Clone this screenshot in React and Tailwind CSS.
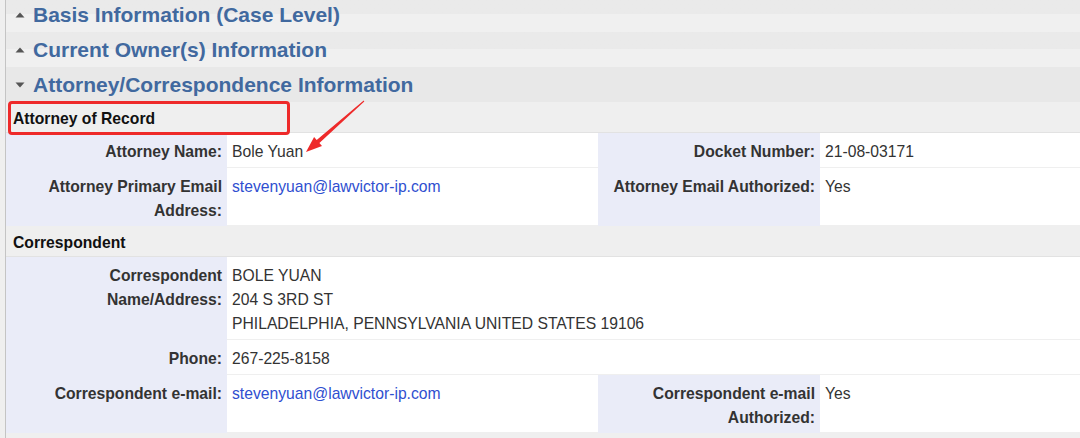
import React from "react";

const font = { fontFamily: '"Liberation Sans", Arial, sans-serif' };

function Caret({ open }) {
  return (
    <svg width="10" height="6" viewBox="0 0 10 6" className="shrink-0">
      {open ? (
        <polygon points="0.5,0.5 9.5,0.5 5,5.5" fill="#555" />
      ) : (
        <polygon points="0.5,5.5 9.5,5.5 5,0.5" fill="#555" />
      )}
    </svg>
  );
}

function SectionHeader({ title, open }) {
  return (
    <div
      className={
        open
          ? "h-[35px] flex items-center gap-[8px] pl-[9px] bg-[#e8e8e8]"
          : "h-[35px] flex items-center gap-[8px] pl-[9px] bg-linear-to-b from-[#eaeaea] from-50% to-[#f0f0f0] to-50%"
      }
    >
      <Caret open={open} />
      <span className="text-[21px] font-bold text-[#41699f] leading-none">{title}</span>
    </div>
  );
}

function SubHeader({ children }) {
  return (
    <div className="h-[31px] flex items-center pt-[3px] pl-[7px] bg-[#efefef] border-b border-[#e2e2e2] text-[15.7px] font-bold text-[#111]">
      {children}
    </div>
  );
}

function Label({ children }) {
  return (
    <div className="bg-[#eaecf8] text-right pr-[5px] pt-[7px] pb-[3px] font-bold text-[#333]">{children}</div>
  );
}

function Value({ children, span }) {
  return (
    <div
      className={
        "bg-white pl-[5px] pt-[7px] pb-[3px] text-[#333] border-b border-[#efefef] " + (span ? "col-span-3" : "")
      }
    >
      {children}
    </div>
  );
}

function Mail({ children }) {
  return <span className="text-[#2f4fd0]">{children}</span>;
}

export default function App() {
  return (
    <div className="w-[1080px] h-[438px] overflow-hidden bg-[#efefef] pl-[5px]" style={font}>
      <div className="relative -mt-[3px] border-l border-[#c4c4c4] min-h-[450px]">
        <SectionHeader title="Basis Information (Case Level)" />
        <SectionHeader title="Current Owner(s) Information" />
        <SectionHeader title="Attorney/Correspondence Information" open />

        <SubHeader>Attorney of Record</SubHeader>
        <div className="grid grid-cols-[221px_371px_222px_1fr] text-[15.7px] leading-6">
          <Label>Attorney Name:</Label>
          <Value>Bole Yuan</Value>
          <Label>Docket Number:</Label>
          <Value>21-08-03171</Value>

          <Label>
            Attorney Primary Email
            <br />
            Address:
          </Label>
          <Value>
            <Mail>stevenyuan@lawvictor-ip.com</Mail>
          </Value>
          <Label>Attorney Email Authorized:</Label>
          <Value>Yes</Value>
        </div>

        <SubHeader>Correspondent</SubHeader>
        <div className="grid grid-cols-[221px_371px_222px_1fr] text-[15.7px] leading-6">
          <Label>
            Correspondent
            <br />
            Name/Address:
          </Label>
          <Value span>
            BOLE YUAN
            <br />
            204 S 3RD ST
            <br />
            PHILADELPHIA, PENNSYLVANIA UNITED STATES 19106
          </Value>

          <Label>Phone:</Label>
          <Value span>267-225-8158</Value>

          <Label>Correspondent e-mail:</Label>
          <Value>
            <Mail>stevenyuan@lawvictor-ip.com</Mail>
          </Value>
          <Label>
            Correspondent e-mail
            <br />
            Authorized:
          </Label>
          <Value>Yes</Value>
        </div>

        {/* red annotation box + arrow */}
        <div className="absolute left-[2px] top-[104px] w-[282px] h-[34px] border-[3px] border-[#ee2a2a] rounded-[4px] pointer-events-none" />
        <svg
          className="absolute left-0 top-0 pointer-events-none"
          width="400"
          height="170"
          viewBox="6 -3 400 170"
        >
          <polygon
            points="364.3,101.4 319.4,142.9 322,145.9 306,152 314.1,136.9 316.7,139.9 363.7,100.6"
            fill="#ee2a2a"
          />
        </svg>
      </div>
    </div>
  );
}
